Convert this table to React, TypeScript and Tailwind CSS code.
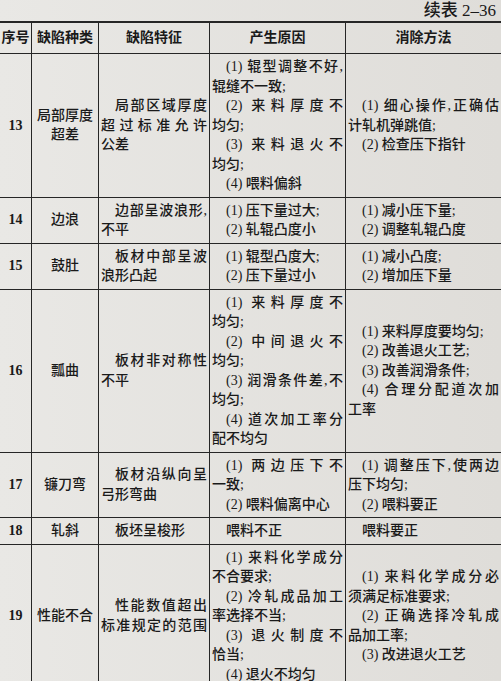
import React from "react";

// ">" at the start = first line of an item (indented one character)
// "|" at the end = full line, spread to the cell width
type Row = {
  no: string;
  kind: string[];
  feature: string[];
  cause: string[];
  method: string[];
};

const rows: Row[] = [
  {
    no: "13",
    kind: ["局部厚度", "超差"],
    feature: [">局部区域厚度|", "超过标准允许|", "公差"],
    cause: [
      ">(1) 辊型调整不好,|",
      "辊缝不一致;",
      ">(2) 来料厚度不|",
      "均匀;",
      ">(3) 来料退火不|",
      "均匀;",
      ">(4) 喂料偏斜",
    ],
    method: [">(1) 细心操作,正确估|", "计轧机弹跳值;", ">(2) 检查压下指针"],
  },
  {
    no: "14",
    kind: ["边浪"],
    feature: [">边部呈波浪形,|", "不平"],
    cause: [">(1) 压下量过大;", ">(2) 轧辊凸度小"],
    method: [">(1) 减小压下量;", ">(2) 调整轧辊凸度"],
  },
  {
    no: "15",
    kind: ["鼓肚"],
    feature: [">板材中部呈波|", "浪形凸起"],
    cause: [">(1) 辊型凸度大;", ">(2) 压下量过小"],
    method: [">(1) 减小凸度;", ">(2) 增加压下量"],
  },
  {
    no: "16",
    kind: ["瓢曲"],
    feature: [">板材非对称性|", "不平"],
    cause: [
      ">(1) 来料厚度不|",
      "均匀;",
      ">(2) 中间退火不|",
      "均匀;",
      ">(3) 润滑条件差,不|",
      "均匀;",
      ">(4) 道次加工率分|",
      "配不均匀",
    ],
    method: [
      ">(1) 来料厚度要均匀;",
      ">(2) 改善退火工艺;",
      ">(3) 改善润滑条件;",
      ">(4) 合理分配道次加|",
      "工率",
    ],
  },
  {
    no: "17",
    kind: ["镰刀弯"],
    feature: [">板材沿纵向呈|", "弓形弯曲"],
    cause: [">(1) 两边压下不|", "一致;", ">(2) 喂料偏离中心"],
    method: [">(1) 调整压下,使两边|", "压下均匀;", ">(2) 喂料要正"],
  },
  {
    no: "18",
    kind: ["轧斜"],
    feature: [">板坯呈梭形"],
    cause: [">喂料不正"],
    method: [">喂料要正"],
  },
  {
    no: "19",
    kind: ["性能不合"],
    feature: [">性能数值超出|", "标准规定的范围|"],
    cause: [
      ">(1) 来料化学成分|",
      "不合要求;",
      ">(2) 冷轧成品加工|",
      "率选择不当;",
      ">(3) 退火制度不|",
      "恰当;",
      ">(4) 退火不均匀",
    ],
    method: [
      ">(1) 来料化学成分必|",
      "须满足标准要求;",
      ">(2) 正确选择冷轧成|",
      "品加工率;",
      ">(3) 改进退火工艺",
    ],
  },
];

function Lines({ lines }: { lines: string[] }) {
  return (
    <>
      {lines.map((raw, k) => {
        const indent = raw.startsWith(">");
        const justify = raw.endsWith("|");
        const text = raw.replace(/^>/, "").replace(/\|$/, "");
        return (
          <div
            key={k}
            className={
              "whitespace-nowrap " +
              (indent ? "pl-[1em] " : "") +
              (justify ? "text-justify [text-align-last:justify]" : "text-left")
            }
          >
            {text}
          </div>
        );
      })}
    </>
  );
}

const cell = "flex flex-col justify-center border-r border-b-[1.5px] border-[#262626] px-[2px] py-[3px]";

export default function App() {
  return (
    <div
      className="w-[501px] h-[681px] overflow-hidden bg-gradient-to-r from-[#e9e8e5] to-[#dfddd9] text-[#1a1a1a] text-[14px] leading-[19.5px] font-medium"
      style={{ fontFamily: '"Liberation Serif", "Noto Sans CJK SC", serif' }}
    >
      <div className="flex justify-end pr-[5px] pt-[1px] h-[21px] text-[17px] leading-[19px]">
        续表 2–36
      </div>

      <div className="grid grid-cols-[32px_67px_111px_136px_155px] border-t-2 border-[#262626]">
        {["序号", "缺陷种类", "缺陷特征", "产生原因", "消除方法"].map((h, i) => (
          <div
            key={h}
            className={
              "flex items-center justify-center h-[31px] border-b-[1.5px] border-[#262626] font-semibold " +
              (i < 4 ? "border-r" : "")
            }
          >
            {h}
          </div>
        ))}

        {rows.map((r) => (
          <React.Fragment key={r.no}>
            <div className={cell + " items-center font-semibold"}>{r.no}</div>
            <div className={cell + " items-center"}>
              {r.kind.map((k) => (
                <div key={k} className="text-center whitespace-nowrap">
                  {k}
                </div>
              ))}
            </div>
            <div className={cell}>
              <Lines lines={r.feature} />
            </div>
            <div className={cell}>
              <Lines lines={r.cause} />
            </div>
            <div className={cell.replace("border-r ", "")}>
              <Lines lines={r.method} />
            </div>
          </React.Fragment>
        ))}
      </div>
    </div>
  );
}
